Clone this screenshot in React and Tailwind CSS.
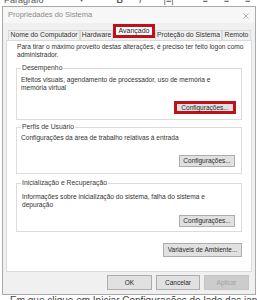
import React from "react"

const font = { fontFamily: '"Liberation Sans", Arial, sans-serif' }

const Btn = ({ children, className = "" }) => (
  <div
    className={`flex items-center justify-center border border-[#adadad] bg-[#e1e1e1] text-[6.5px] text-[#2a2a2a] ${className}`}
  >
    {children}
  </div>
)

const Group = ({ label, className = "", children }) => (
  <div className={`relative mx-[9px] flex flex-col border border-[#dcdcdc] ${className}`}>
    <span className="absolute -top-[5px] left-[4px] bg-white px-[1px] text-[6.8px] leading-[8px] text-[#3a3a3a]">
      {label}
    </span>
    {children}
  </div>
)

const tabs = [
  { name: "Nome do Computador", w: "w-[72px]" },
  { name: "Hardware", w: "w-[33px]" },
  { name: "Avançado", w: "w-[42px]", active: true },
  { name: "Proteção do Sistema", w: "w-[67px]" },
  { name: "Remoto", w: "w-[29px]" },
]

export default function App() {
  return (
    <div className="relative h-[300px] w-[257px] overflow-hidden bg-white" style={font}>
      {/* word toolbar, cut off */}
      <div className="h-[6px] overflow-hidden">
        <div className="-mt-[5px] flex items-center text-[9px] leading-[10px] text-[#555]">
          <span className="ml-[4px]">Parágrafo</span>
          <span className="ml-[36px] text-[6px]">▾</span>
          <span className="ml-[34px] font-bold">B</span>
          <span className="ml-[16px] italic">I</span>
          <span className="ml-[22px]">|≡|</span>
          <span className="ml-[10px]">“</span>
          <span className="ml-[16px]">≡</span>
          <span className="ml-[16px]">≡</span>
          <span className="ml-[16px]">≡</span>
        </div>
      </div>

      {/* dialog */}
      <div className="ml-[2px] flex h-[289px] w-[254px] flex-col border border-[#a9a9a9] bg-[#f0f0f0]">
        <div className="flex h-[16px] items-center justify-between bg-[#f7f7f7] pl-[5px] pr-[6px]">
          <span className="text-[7.5px] text-[#8c8c8c]">Propriedades do Sistema</span>
          <svg width="6" height="6" viewBox="0 0 6 6" className="mt-[1px]">
            <path d="M0.5 0.5 L5.5 5.5 M5.5 0.5 L0.5 5.5" stroke="#a0a0a0" strokeWidth="0.8" />
          </svg>
        </div>

        {/* tabs */}
        <div className="mt-[1px] flex h-[16px] items-end pl-[5px]">
          {tabs.map((t) =>
            t.active ? (
              <div
                key={t.name}
                className={`${t.w} mb-[2px] flex h-[14px] items-center justify-center border-[3px] border-[#c0101a] bg-white text-[7px] text-[#222]`}
              >
                {t.name}
              </div>
            ) : (
              <div
                key={t.name}
                className={`${t.w} flex h-[10px] items-center justify-center overflow-hidden whitespace-nowrap border-l border-r border-t border-[#d9d9d9] bg-[#f0f0f0] text-[6.8px] text-[#333]`}
              >
                {t.name}
              </div>
            )
          )}
        </div>

        {/* panel */}
        <div className="mx-[3px] flex h-[232px] flex-col border border-[#d9d9d9] bg-white text-[6.6px] leading-[8px] text-[#333]">
          <p className="mt-[2px] pl-[10px] pr-[4px]">
            Para tirar o máximo proveito destas alterações, é preciso ter feito logon como administrador.
          </p>

          <Group label="Desempenho" className="mt-[9px] h-[52px]">
            <p className="pl-[4px] pr-[20px] pt-[7px]">
              Efeitos visuais, agendamento de processador, uso de memória e memória virtual
            </p>
            <Btn className="mb-[5px] mr-[5px] mt-auto h-[13px] w-[62px] self-end !border-[3px] !border-[#c0101a]">
              Configurações...
            </Btn>
          </Group>

          <Group label="Perfis de Usuário" className="mt-[7px] h-[47px]">
            <p className="pl-[4px] pt-[6px]">Configurações da área de trabalho relativas à entrada</p>
            <Btn className="mb-[6px] mr-[6px] mt-auto h-[12px] w-[56px] self-end">Configurações...</Btn>
          </Group>

          <Group label="Inicialização e Recuperação" className="mt-[9px] h-[49px]">
            <p className="pl-[5px] pr-[35px] pt-[9px]">
              Informações sobre inicialização do sistema, falha do sistema e depuração
            </p>
            <Btn className="mb-[4px] mr-[6px] mt-auto h-[12px] w-[56px] self-end">Configurações...</Btn>
          </Group>

          <Btn className="mr-[9px] mt-[11px] h-[14px] w-[79px] self-end">Variáveis de Ambiente...</Btn>
        </div>

        {/* dialog buttons */}
        <div className="mr-[6px] mt-[3px] flex justify-end gap-[4px]">
          <Btn className="h-[15px] w-[45px]">OK</Btn>
          <Btn className="h-[15px] w-[44px]">Cancelar</Btn>
          <div className="flex h-[15px] w-[45px] items-center justify-center border border-[#c4c4c4] bg-[#cccccc] text-[6.5px] text-[#a3a3a3]">
            Aplicar
          </div>
        </div>
      </div>

      {/* article text below, cut off */}
      <div className="h-[5px] overflow-hidden">
        <p className="ml-[10px] whitespace-nowrap text-[10px] leading-[11px] text-[#444]">
          Em que clique em Iniciar Configurações do lado das janelas
        </p>
      </div>
    </div>
  )
}
